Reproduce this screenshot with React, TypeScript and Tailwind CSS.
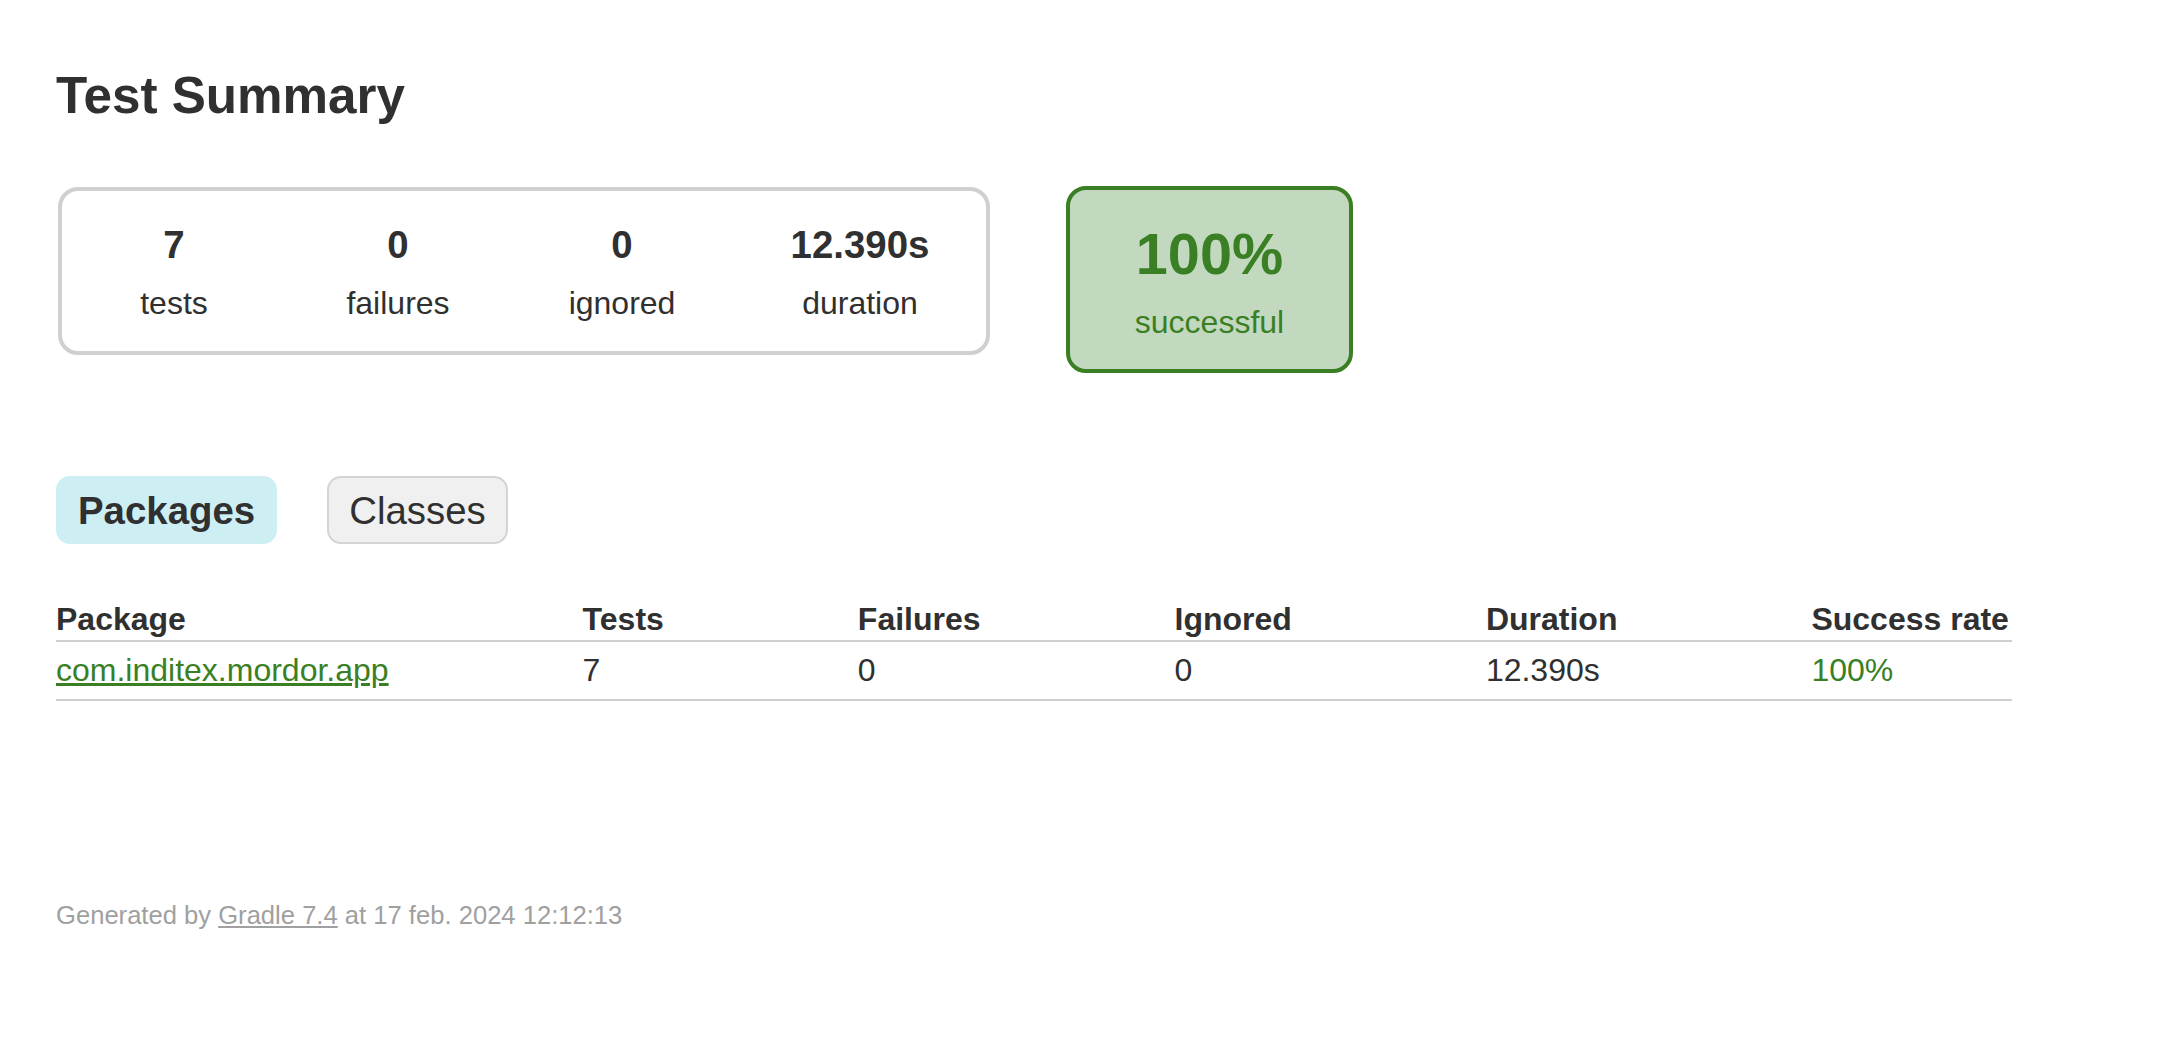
import React from 'react';

const stats = [
  { value: '7', label: 'tests', w: 'w-[224px]' },
  { value: '0', label: 'failures', w: 'w-[224px]' },
  { value: '0', label: 'ignored', w: 'w-[224px]' },
  { value: '12.390s', label: 'duration', w: 'w-[252px]' },
];

function App() {
  return (
    <div className="min-h-[1060px] bg-white text-[#303030] font-['Liberation_Sans',Arial,sans-serif] text-[32px] leading-[37px] pl-[56px] pt-[66px]">
      <h1 className="text-[51.2px] leading-[59px] font-bold whitespace-nowrap">Test Summary</h1>

      {/* summary boxes */}
      <div className="flex items-start mt-[62px]">
        <div className="ml-[2px] flex border-[4px] border-[#d0d0d0] rounded-[20px]">
          {stats.map((s) => (
            <div key={s.label} className={`${s.w} text-center pt-[32px] pb-[29px]`}>
              <div className="text-[38.4px] leading-[44px] font-bold mb-[18px]">{s.value}</div>
              <div>{s.label}</div>
            </div>
          ))}
        </div>
        <div className="ml-[76px] -mt-[1px] w-[287px] text-center border-[4px] border-[#3a7f24] bg-[#c2d9bf] rounded-[20px] text-[#3a7f24] pt-[31px] pb-[28px]">
          <div className="text-[57.6px] leading-[66px] font-bold mb-[17px]">100%</div>
          <div>successful</div>
        </div>
      </div>

      {/* tabs */}
      <ul className="flex items-start mt-[103px]">
        <li className="mr-[50px] px-[20px] pt-[11px] pb-[9px] border-[2px] border-[#cdeef3] bg-[#cdeef3] rounded-[14px] text-[38.4px] leading-[44px] font-bold">
          Packages
        </li>
        <li className="px-[20px] pt-[11px] pb-[9px] border-[2px] border-[#d4d4d4] bg-[#f0f0f0] rounded-[14px] text-[38.4px] leading-[44px]">
          Classes
        </li>
      </ul>

      {/* packages table */}
      <table className="mt-[55px] border-collapse border-b-[2px] border-[#d0d0d0]">
        <thead>
          <tr>
            <th className="text-left font-bold whitespace-nowrap py-[2px] pl-0 border-b-[2px] border-[#d0d0d0]">Package</th>
            <th className="text-left font-bold whitespace-nowrap py-[2px] pl-[194px] border-b-[2px] border-[#d0d0d0]">Tests</th>
            <th className="text-left font-bold whitespace-nowrap py-[2px] pl-[194px] border-b-[2px] border-[#d0d0d0]">Failures</th>
            <th className="text-left font-bold whitespace-nowrap py-[2px] pl-[194px] border-b-[2px] border-[#d0d0d0]">Ignored</th>
            <th className="text-left font-bold whitespace-nowrap py-[2px] pl-[194px] border-b-[2px] border-[#d0d0d0]">Duration</th>
            <th className="text-left font-bold whitespace-nowrap py-[2px] pl-[194px] pr-[3px] border-b-[2px] border-[#d0d0d0]">Success rate</th>
          </tr>
        </thead>
        <tbody>
          <tr>
            <td className="whitespace-nowrap py-[10px] pl-0">
              <a href="#" className="text-[#3a7f24] underline">com.inditex.mordor.app</a>
            </td>
            <td className="whitespace-nowrap py-[10px] pl-[194px]">7</td>
            <td className="whitespace-nowrap py-[10px] pl-[194px]">0</td>
            <td className="whitespace-nowrap py-[10px] pl-[194px]">0</td>
            <td className="whitespace-nowrap py-[10px] pl-[194px]">12.390s</td>
            <td className="whitespace-nowrap py-[10px] pl-[194px] text-[#3a7f24]">100%</td>
          </tr>
        </tbody>
      </table>

      {/* footer */}
      <p className="mt-[200px] text-[25.6px] leading-[29.4px] text-[#a0a0a0] whitespace-nowrap">
        Generated by <a href="#" className="underline text-[#a0a0a0]">Gradle 7.4</a> at 17 feb. 2024 12:12:13
      </p>
    </div>
  );
}

export default App;
